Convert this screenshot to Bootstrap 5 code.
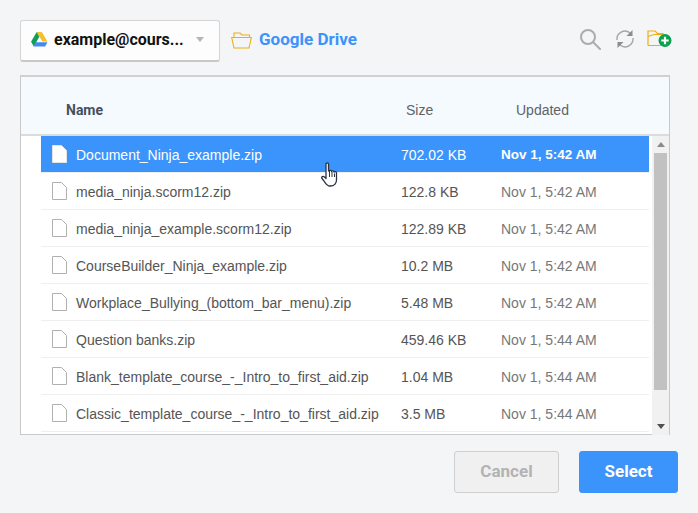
<!DOCTYPE html>
<html lang="en">
<head>
  <meta charset="UTF-8" />
  <meta name="viewport" content="width=device-width, initial-scale=1.0"/>
  <title>Google Drive picker</title>
  <link href="https://cdn.jsdelivr.net/npm/bootstrap@5.3.0/dist/css/bootstrap.min.css" rel="stylesheet"/>
  <style>
    html, body { height: 100%; }
    body {
      background: #f4f5f7;
      font-family: "Liberation Sans", Arial, sans-serif;
      overflow: hidden;
    }
    .picker { width: 698px; height: 513px; padding: 20px 20px 0 20px; position: relative; }
    .top-bar { height: 42px; margin-bottom: 13px; }
    .account-select {
      width: 200px; height: 42px; background: #fdfdfd;
      border: 1px solid #d4d4d4; border-bottom: 2px solid #c8c8c8; border-radius: 3px;
      padding: 0 15px 2px 10px; color: #111;
      font: 700 16px Roboto, "Liberation Sans", sans-serif;
    }
    .drive-logo { margin-right: 6px; flex: none; }
    .account-caret { width: 0; height: 0; border: 4px solid transparent; border-top: 5px solid #b5b5b5; border-bottom: 0; }
    .crumb-folder { margin-left: 11px; margin-top: -2px; flex: none; }
    .drive-crumb { color: #3b94fb; font: 700 17px Roboto, "Liberation Sans", sans-serif; margin-left: 7px; margin-top: -4px; }
    .tool-icons { margin-left: auto; margin-right: 6px; margin-top: -4px; gap: 12px; }
    .tool-search { margin-right: 2px; }
    .file-panel {
      width: 650px; height: 360px; background: #fff;
      border: 1px solid #c9c9c9; border-top: 2px solid #d0d0d0;
    }
    .file-head {
      height: 59px; background: #f5faff; border-bottom: 2px solid #dcdcdc;
      font-size: 14px; color: #5f6368; padding: 10px 0 0 45px;
    }
    .head-name { width: 340px; margin-top: -2px; font: 700 14px Roboto, "Liberation Sans", sans-serif; color: #46505c; }
    .head-size { width: 110px; }
    .file-body { height: 299px; }
    .file-rows { width: 608px; margin-left: 20px; }
    .file-row {
      height: 37px; padding-top: 2px; border-bottom: 1px solid #efefef; font-size: 14px; color: #555;
    }
    .file-row.chosen { background: #3b94fb; color: #fff; }
    .file-icon { width: 17px; margin-left: 10px; margin-right: 8px; margin-top: -2px; flex: none; }
    .file-name { width: 325px; white-space: nowrap; }
    .file-size { width: 100px; }
    .file-date { color: #777; }
    .chosen .file-date { color: #fff; font-weight: 700; font-size: 13.5px; }
    .scroll-track {
      width: 17px; margin-left: 3px; background: #f1f1f1; flex: none;
    }
    .scroll-btn { height: 17px; }
    .scroll-up { width: 0; height: 0; border: 4px solid transparent; border-bottom: 5px solid #8a8a8a; border-top: 0; }
    .scroll-down { width: 0; height: 0; border: 4px solid transparent; border-top: 5px solid #505050; border-bottom: 0; }
    .scroll-thumb { width: 13px; height: 237px; background: #c1c1c1; margin-left: 2px; }
    .scroll-gap { flex: 1; }
    .foot-bar { padding-top: 16px; gap: 20px; }
    .btn-cancel, .btn-select {
      height: 42px; font: 700 17px Roboto, "Liberation Sans", sans-serif; border-radius: 3px; padding: 0 0 2px;
    }
    .btn-cancel { width: 105px; background: #f0f0f0; border: 1px solid #cfcfcf; color: #b3b3b3; }
    .btn-select { width: 99px; background: #3b94fb; border: 1px solid #3b94fb; color: #fff; }
    .hand-cursor { position: absolute; left: 321px; top: 162px; }
  </style>
</head>
<body>
  <div class="picker">
    <div class="top-bar d-flex align-items-center">
      <div class="account-select d-flex align-items-center">
        <svg class="drive-logo" width="17" height="15" viewBox="0 0 18 16">
          <path d="M6 0h5.500l6 10h-5.500z" fill="#f6c02c"/>
          <path d="M6 0l2.800 5L3 15.500 0 10.300z" fill="#0f9d58"/>
          <path d="M5 11h12.500L15 15.500H2.500z" fill="#4688f1"/>
        </svg>
        <span class="flex-grow-1">example@cours...</span>
        <span class="account-caret"></span>
      </div>
      <svg class="crumb-folder" width="21" height="17" viewBox="0 0 21 17" fill="none" stroke="#f0ae13" stroke-width="1.100">
        <path d="M3 5.500V1h6l2 2h7.500v2.500"/>
        <path d="M.7 5.500h19.600L18 16H3z"/>
      </svg>
      <span class="drive-crumb">Google Drive</span>
      <div class="tool-icons d-flex align-items-center">
        <svg class="tool-search" width="22" height="22" viewBox="0 0 22 22" fill="none" stroke="#acacac" stroke-width="2">
          <circle cx="9" cy="9" r="7"/><path d="M14 14l7 7" stroke-linecap="round"/>
        </svg>
        <svg width="20" height="20" viewBox="0 0 20 20" fill="none" stroke="#a5a5a5" stroke-width="1.400">
          <path d="M2 11a8 8 0 0 1 13-7"/><path d="M18 9a8 8 0 0 1-13 7"/>
          <path d="M17.500 1v6h-6z" fill="#8c8c8c" stroke="none"/><path d="M2.500 19v-6h6z" fill="#8c8c8c" stroke="none"/>
        </svg>
        <svg width="25" height="18" viewBox="0 0 25 18">
          <path d="M1 15.500V1h7l2.500 2.500H16v3M1 6.500l6-2h9M1 15.500h13" fill="none" stroke="#efae10" stroke-width="1.200"/>
          <circle cx="18" cy="10.500" r="6.500" fill="#0aa14f"/>
          <path d="M18 6.800v7.400M14.300 10.500h7.400" stroke="#fff" stroke-width="2.200"/>
        </svg>
      </div>
    </div>

    <div class="file-panel">
      <div class="file-head d-flex align-items-center">
        <div class="head-name">Name</div>
        <div class="head-size">Size</div>
        <div>Updated</div>
      </div>
      <div class="file-body d-flex">
        <div class="file-rows" id="fileRows"></div>
        <div class="scroll-track d-flex flex-column">
          <div class="scroll-btn d-flex align-items-center justify-content-center"><span class="scroll-up"></span></div>
          <div class="scroll-thumb"></div>
          <div class="scroll-gap"></div>
          <div class="scroll-btn d-flex align-items-center justify-content-center"><span class="scroll-down"></span></div>
        </div>
      </div>
    </div>

    <div class="foot-bar d-flex justify-content-end">
      <button type="button" class="btn btn-cancel">Cancel</button>
      <button type="button" class="btn btn-select">Select</button>
    </div>

    <svg class="hand-cursor" width="18" height="25" viewBox="0 0 18 25">
      <path d="M5 2c0-1.500 2.500-1.500 2.500 0v7l1-.5c1-.5 2 0 2 1 .5-1 2.500-.8 2.500.5.800-.8 2.500-.3 2.500 1V18c0 3-2 6-5.500 6H9c-3 0-4-2-6-5l-2-2.500c-1-1.500 1-3 2.500-1.500L5 16.500z" fill="#fff" stroke="#2a3342" stroke-width="1.300" stroke-linejoin="round"/>
      <path d="M8.500 9v6M11 10v5M13.500 11.500V15" stroke="#2a3342" stroke-width="1"/>
    </svg>
  </div>

  <script src="https://cdn.jsdelivr.net/npm/bootstrap@5.3.0/dist/js/bootstrap.bundle.min.js"></script>
  <script>
    const files = [
      ["Document_Ninja_example.zip", "702.02 KB", "Nov 1, 5:42 AM"],
      ["media_ninja.scorm12.zip", "122.8 KB", "Nov 1, 5:42 AM"],
      ["media_ninja_example.scorm12.zip", "122.89 KB", "Nov 1, 5:42 AM"],
      ["CourseBuilder_Ninja_example.zip", "10.2 MB", "Nov 1, 5:42 AM"],
      ["Workplace_Bullying_(bottom_bar_menu).zip", "5.48 MB", "Nov 1, 5:42 AM"],
      ["Question banks.zip", "459.46 KB", "Nov 1, 5:44 AM"],
      ["Blank_template_course_-_Intro_to_first_aid.zip", "1.04 MB", "Nov 1, 5:44 AM"],
      ["Classic_template_course_-_Intro_to_first_aid.zip", "3.5 MB", "Nov 1, 5:44 AM"]
    ];

    const rows = document.getElementById("fileRows");
    files.forEach((file, index) => {
      const fill = index === 0 ? "#fff" : "none";
      const line = index === 0 ? "#e4e4e4" : "#b0b0b0";
      const row = document.createElement("div");
      row.className = "file-row d-flex align-items-center" + (index === 0 ? " chosen" : "");
      row.innerHTML = `
        <svg class="file-icon" width="17" height="18" viewBox="0 0 17 18"><path d="M1.500.500h9l5 5v12h-14z" fill="${fill}" stroke="${line}"/></svg>
        <div class="file-name">${file[0]}</div>
        <div class="file-size">${file[1]}</div>
        <div class="file-date">${file[2]}</div>`;
      rows.appendChild(row);
    });
  </script>
</body>
</html>
